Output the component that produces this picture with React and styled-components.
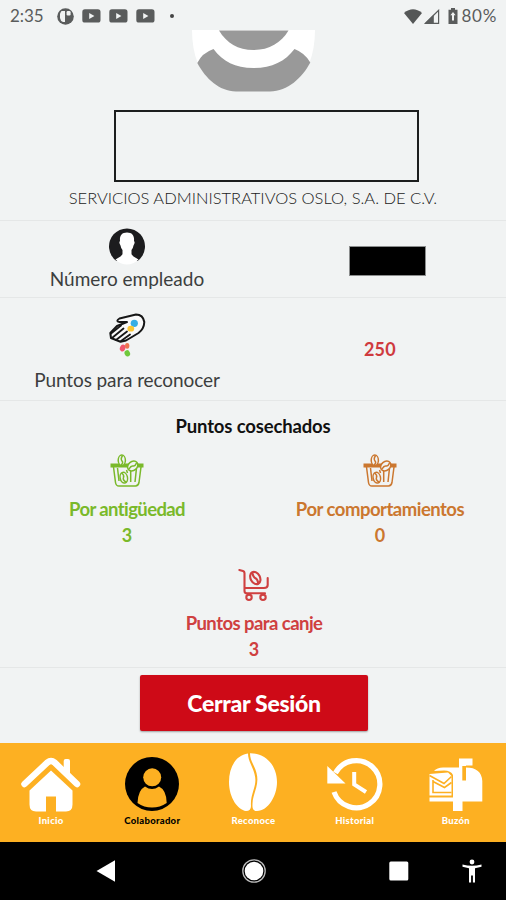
import React from 'react';
import styled, { createGlobalStyle } from 'styled-components';

const GlobalStyle = createGlobalStyle`
  * {
    box-sizing: border-box;
  }

  body {
    margin: 0;
    background: #f1f3f3;
    font-family: Lato, 'Liberation Sans', sans-serif;
    font-variant-ligatures: none;
  }

  svg {
    display: block;
    flex-shrink: 0;
  }
`

const Screen = styled.div`
  display: flex;
  flex-direction: column;
  width: 506px;
  height: 900px;
  overflow: hidden;
  background: #f1f3f3;
`

const StatusBar = styled.header`
  display: flex;
  align-items: center;
  height: 30px;
  padding: 2px 9px 0 10px;
  color: #5a5c5c;
`

const StatusText = styled.span`
  font-size: 17px;
  line-height: 20px;
  letter-spacing: ${props => props.$spacing || 0}px;
  white-space: nowrap;
`

const StatusIcons = styled.div`
  display: flex;
  align-items: center;
  gap: ${props => props.$gap}px;
  margin-left: ${props => props.$left || 'auto'};
  margin-right: ${props => props.$right || 0}px;
`

const Dot = styled.i`
  width: 4px;
  height: 4px;
  margin-left: 7px;
  border-radius: 50%;
  background: #444;
`

const Profile = styled.section`
  display: flex;
  flex-direction: column;
  align-items: center;
  height: 191px;
  border-bottom: 1px solid #e5e7e7;
`

const NameBox = styled.div`
  width: 305px;
  height: 72px;
  margin: 18px 0 0 27px;
  border: 2px solid #1c1e1e;
`

const Text = styled.p`
  margin: ${props => props.$top || 0}px 0 0;
  font-size: ${props => props.$size || 19}px;
  font-weight: ${props => props.$weight || 400};
  line-height: 26px;
  letter-spacing: ${props => props.$spacing || 0}px;
  color: ${props => props.$color || '#3c3e3e'};
  text-align: center;
  white-space: nowrap;
`

const Row = styled.section`
  display: grid;
  grid-template-columns: 1fr 1fr;
  height: ${props => props.$height}px;
  border-bottom: 1px solid #e5e7e7;
`

const Cell = styled.div`
  display: flex;
  flex-direction: column;
  align-items: center;
  padding: ${props => props.$top || 0}px 0 0 ${props => props.$left || 1}px;
`

const HiddenNumber = styled.div`
  width: 77px;
  height: 30px;
  border: 1px solid #8b8d8d;
  background: #000;
`

const Points = styled.section`
  display: flex;
  flex-direction: column;
  align-items: center;
  height: 267px;
  padding-top: 12px;
  border-bottom: 1px solid #e5e7e7;
`

const Columns = styled.div`
  display: grid;
  grid-template-columns: 1fr 1fr;
  width: 100%;
  margin-top: 15px;
`

const Footer = styled.section`
  display: flex;
  justify-content: center;
  height: 75px;
  padding: 7px 0 0 1px;
`

const LogoutButton = styled.button`
  width: 228px;
  height: 56px;
  padding: 0 0 0 1px;
  border: 0;
  border-radius: 2px;
  background: #ce0a17;
  box-shadow: 0 1px 2px rgba(0, 0, 0, 0.35);
  color: #fff;
  font-family: inherit;
  font-size: 23px;
  font-weight: 900;
  letter-spacing: -0.3px;
  cursor: pointer;
`

const TabBar = styled.nav`
  display: grid;
  grid-template-columns: repeat(5, 1fr);
  height: 99px;
  background: #fdb022;
`

const Tab = styled.a`
  display: flex;
  flex-direction: column;
  align-items: center;
  padding: 10px 0 0 1px;
  color: ${props => props.$active ? '#000' : '#fff'};
  font-size: 9.5px;
  font-weight: 900;
  line-height: 12px;
  letter-spacing: 0.3px;
  white-space: nowrap;
`

const TabIcon = styled.span`
  display: flex;
  align-items: center;
  height: 62px;
`

const SystemBar = styled.footer`
  display: flex;
  align-items: center;
  height: 58px;
  padding-left: 96px;
  background: #000;
`

const SystemButton = styled.span`
  margin-left: ${props => props.$left || 0}px;
`

const Pocket = () => (
  <svg width="17" height="17" viewBox="0 0 17 17">
    <circle cx="8.5" cy="8.5" r="8.3" fill="#5a5c5c" />
    <path d="M4.5 3H8V14H6Q3.6 13.4 3 10V5.5Z" fill="#f1f3f3" />
    <rect x="9.6" y="3" width="4" height="4.5" rx="1.2" fill="#f1f3f3" />
  </svg>
)

const Video = () => (
  <svg width="19" height="14" viewBox="0 0 19 14">
    <rect x="0.3" y="0.3" width="18.2" height="13.2" rx="2.6" fill="#5a5c5c" />
    <path d="M7.2 4V10L12.4 7Z" fill="#f1f3f3" />
  </svg>
)

const Wifi = () => (
  <svg width="18" height="15" viewBox="0 0 18 15">
    <path d="M0 4Q9 -3.5 18 4L9 15Z" fill="#555757" />
  </svg>
)

const Signal = () => (
  <svg width="16" height="15" viewBox="0 0 16 15">
    <path d="M1.5 14.3L14.6 1.3V14.3Z" fill="none" stroke="#5a5c5c" strokeWidth="1.2" />
    <path d="M0.5 14.8L9.8 5.5V14.8Z" fill="#5a5c5c" />
  </svg>
)

const Battery = () => (
  <svg width="10" height="16" viewBox="0 0 10 16">
    <path d="M3 0H7V1.8H9.5V16H0.5V1.8H3Z" fill="#5a5c5c" />
    <path d="M5 4L7.6 7.2H6V12.5H4V7.2H2.4Z" fill="#f1f3f3" />
  </svg>
)

const Logo = () => (
  <svg width="123" height="62" viewBox="0 0 123 62">
    <path d="M0 0H123Q123 19 117 34L61 55L6 34Q0 19 0 0Z" fill="#fff" />
    <path d="M27 0.5H96.5C89 13 77 20 61.5 20S34.5 13 27 0.5Z" fill="#999" />
    <path d="M5.3 33Q10 23 21.5 19C31 31.5 43 38 61.5 38S93 31.5 102.5 19Q113 23 118.3 32.5C110 48 96 61 78 61.5H44C27 61 14 49 5.3 33Z" fill="#999" />
  </svg>
)

const Employee = () => (
  <svg width="38" height="38" viewBox="0 0 38 38">
    <path d="M8.5 34A18 18 0 1 1 29.5 34Z" fill="#1c1c1e" />
    <path d="M19 5.5C24.5 5.5 26.5 9 26 14Q27.5 15.5 25.5 18.5Q25 21.5 23.5 23V27Q24 29 30.5 32.5Q25.5 37.5 19 37.5T7.5 32.5Q14 29 14.5 27V23Q13 21.5 12.5 18.5Q10.5 15.5 12 14C11.5 9 13.5 5.5 19 5.5Z" fill="#fff" />
  </svg>
)

const Hand = () => (
  <svg width="37" height="45" viewBox="0 0 37 45">
    <path d="M10 9Q6.5 8 10.5 5.5L27 1.500Q34 1.500 35.300 9Q35 16 29.500 20L17 27.500L11.500 28.800L2 25L1.300 20L8 13L18 9L10 9" fill="#fafafa" stroke="#161616" strokeWidth="2" strokeLinejoin="round" />
    <path d="M3 25L14.500 15.500M7 27L18 18.500M12 28L21 21.500M2 20.500L12 12.500" fill="none" stroke="#161616" strokeWidth="1.800" strokeLinecap="round" />
    <circle cx="25.300" cy="10.300" r="3.600" fill="#38aee6" />
    <ellipse cx="21.800" cy="15.700" rx="3.400" ry="2.900" fill="#fbc736" />
    <ellipse cx="13.700" cy="35" rx="2.700" ry="3.500" transform="rotate(25 13.700 35)" fill="#f0566c" />
    <ellipse cx="18.200" cy="32.800" rx="2.200" ry="2.900" fill="#ee7350" />
    <ellipse cx="18.300" cy="40.300" rx="2.700" ry="3.200" transform="rotate(-25 18.300 40.300)" fill="#70c83c" />
  </svg>
)

const Basket = ({ color }) => (
  <svg width="34" height="34" viewBox="0 0 34 34">
    <path d="M0.5 9.5H33.5V13.5H0.5Z" fill={color} />
    <g fill="none" stroke={color} strokeWidth="1.5">
      <path d="M3.5 13L5.5 28.5Q6 32 9 32H25.5Q28.3 32 29 28.5L31 13M7.5 14L9 27M20.7 17V28M26.5 14L25 28M16.5 16L17.5 19" />
      <g fill="#f1f3f3">
        <ellipse cx="11.8" cy="6.3" rx="3.6" ry="5.2" />
        <ellipse cx="22.7" cy="12" rx="4.4" ry="5.6" transform="rotate(50 22.7 12)" />
        <ellipse cx="13.8" cy="23.7" rx="3.7" ry="5.4" transform="rotate(-12 13.8 23.7)" />
      </g>
      <path d="M12.5 1.5Q10.3 5 12 7T11 11M19 15Q21 11.5 23 12T26.5 9M11.5 19Q14.5 21 13.5 23.5T16 28" />
    </g>
  </svg>
)

const Cart = () => (
  <svg width="32" height="34" viewBox="0 0 32 34">
    <g fill="none" stroke="#cf4040" strokeWidth="2.1" strokeLinecap="round" strokeLinejoin="round">
      <path d="M1.3 2L5 3Q6.5 3.5 6.5 5V23Q6.5 25.3 9 25.3H27M6.5 20H26Q29.7 20 29.7 17V10" />
      <circle cx="11" cy="29.3" r="2.7" />
      <circle cx="25" cy="29.3" r="2.7" />
      <ellipse cx="17.3" cy="10" rx="4.7" ry="6.5" transform="rotate(-28 17.3 10)" />
      <path d="M14.3 5Q15.5 9.5 17.5 10.3T20.2 15" />
    </g>
  </svg>
)

const Home = () => (
  <svg width="60" height="62" viewBox="0 0 60 62">
    <path d="M42.7 17V8Q42.7 6 44.7 6H47Q49 6 49 8V22Z" fill="#fff" />
    <path d="M3.5 31L26.5 9.5Q30 6.5 33.5 9.5L56 31" fill="none" stroke="#fff" strokeWidth="6.5" strokeLinecap="round" />
    <path d="M30 17.5L51.5 37.5V51.5Q51.5 58.5 45 58.5H35V43.5H25V58.5H15Q8.5 58.5 8.5 51.5V37.5Z" fill="#fff" />
  </svg>
)

const Collaborator = () => (
  <svg width="54" height="62" viewBox="0 0 54 62">
    <circle cx="27" cy="31" r="27" fill="#000" />
    <path d="M20 33.5Q27 38.5 34 33.5Q41.5 37 41.7 50Q35 54.5 27 54.5T12.5 50Q13 37 20 33.5Z" fill="#fdb022" />
    <circle cx="27.2" cy="24.3" r="9" fill="#fdb022" />
  </svg>
)

const Bean = () => (
  <svg width="48" height="62" viewBox="1 0 48 62">
    <path d="M20 0.5C8 2 1 14 1 29C1 45 10 57 18 58Q23 58 23 53C22 40 30 33 26.500 21C25 14 20 8 20 0.500Z" fill="#fff" />
    <path d="M22 0.300C39 0 49 14 49 29C49 43 40 58 29 58Q24 58 24.500 52C24 41 32 33 28.500 20C27 13 22 8 22 0.300Z" fill="#fff" />
  </svg>
)

const History = () => (
  <svg width="56" height="62" viewBox="0 0 56 62">
    <path d="M8.5 20A23.6 23.6 0 1 1 7 39" fill="none" stroke="#fff" strokeWidth="5.2" />
    <path d="M0.3 13V30.5H18.5Z" fill="#fff" />
    <path d="M27.2 19V31.5L39 39" fill="none" stroke="#fff" strokeWidth="4" />
  </svg>
)

const Mailbox = () => (
  <svg width="54" height="62" viewBox="0 0 54 62">
    <path d="M5 18Q8 14.5 14 14.5H30V5.5H43.5V12.5H37V14.5Q52.5 14.5 53.3 28V48.5H33.5V58H24V48.5H0.5V44.5H24V22Q22 17.5 15 17.5Z" fill="#fff" />
    <path d="M33.3 13H37V27.5H33.3Z" fill="#fdb022" />
    <path d="M0.5 21L19 19.5L22.5 23V42.5H0.5Z" fill="#fff" />
    <path d="M0.5 22.5L15 30.5L22.5 23.5M4 27V39.5H22.5M22.5 29.5L15.500 34.500L4 28.500" fill="none" stroke="#fdb022" strokeWidth="1.600" />
  </svg>
)

const App = () => {
  const tabs = [
    { name: 'Inicio', icon: <Home /> },
    { name: 'Colaborador', icon: <Collaborator />, active: true },
    { name: 'Reconoce', icon: <Bean /> },
    { name: 'Historial', icon: <History /> },
    { name: 'Buzón', icon: <Mailbox /> },
  ];

  return (
    <Screen>
      <GlobalStyle />
      <StatusBar>
        <StatusText $spacing={-0.1}>2:35</StatusText>
        <StatusIcons $gap={8} $left="14px">
          <Pocket />
          <Video />
          <Video />
          <Video />
          <Dot />
        </StatusIcons>
        <StatusIcons $gap={2} $right={4}>
          <Wifi />
          <Signal />
        </StatusIcons>
        <StatusIcons $gap={4} $left="4px">
          <Battery />
          <StatusText $spacing={0.7}>80%</StatusText>
        </StatusIcons>
      </StatusBar>
      <Profile>
        <Logo />
        <NameBox />
        <Text $size={16.5} $top={3} $weight={300} $color="#222">SERVICIOS ADMINISTRATIVOS OSLO, S.A. DE C.V.</Text>
      </Profile>
      <Row $height={77}>
        <Cell $top={6}>
          <Employee />
          <Text $top={1}>Número empleado</Text>
        </Cell>
        <Cell $top={25} $left={15}>
          <HiddenNumber />
        </Cell>
      </Row>
      <Row $height={103}>
        <Cell $top={15}>
          <Hand />
          <Text $top={9} $spacing={-0.1}>Puntos para reconocer</Text>
        </Cell>
        <Cell $top={38}>
          <Text $weight={700} $color="#cf3a3e" $size={18} $spacing={0.3}>250</Text>
        </Cell>
      </Row>
      <Points>
        <Text $weight={700} $color="#111" $size={18.5} $spacing={-0.15}>Puntos cosechados</Text>
        <Columns>
          <Cell>
            <Basket color="#7ab92a" />
            <Text $weight={700} $color="#7ab92a" $top={8} $size={18.5} $spacing={-0.6}>Por antigüedad</Text>
            <Text $weight={700} $color="#7ab92a" $size={18}>3</Text>
          </Cell>
          <Cell>
            <Basket color="#cb772f" />
            <Text $weight={700} $color="#cb772f" $top={8} $size={18.5} $spacing={-0.5}>Por comportamientos</Text>
            <Text $weight={700} $color="#cb772f" $size={18}>0</Text>
          </Cell>
        </Columns>
        <Cell $top={20} $left={2}>
          <Cart />
          <Text $weight={700} $color="#cf4040" $top={8} $size={18.5} $spacing={-0.55}>Puntos para canje</Text>
          <Text $weight={700} $color="#cf4040" $size={18}>3</Text>
        </Cell>
      </Points>
      <Footer>
        <LogoutButton>Cerrar Sesión</LogoutButton>
      </Footer>
      <TabBar>
        {tabs.map(tab => (
          <Tab key={tab.name} $active={tab.active}>
            <TabIcon>{tab.icon}</TabIcon>
            {tab.name}
          </Tab>
        ))}
      </TabBar>
      <SystemBar>
        <SystemButton>
          <svg width="19" height="22" viewBox="0 0 19 22">
            <path d="M0.5 11L19 0.3V21.7Z" fill="#fff" />
          </svg>
        </SystemButton>
        <SystemButton $left={127}>
          <svg width="24" height="24" viewBox="0 0 24 24">
            <circle cx="12" cy="12" r="11.2" fill="none" stroke="#bbb" strokeWidth="1.3" />
            <circle cx="12" cy="12" r="9.3" fill="#fff" />
          </svg>
        </SystemButton>
        <SystemButton $left={123}>
          <svg width="20" height="20" viewBox="0 0 20 20">
            <rect x="0.3" y="0.5" width="19" height="19" rx="1.5" fill="#fff" />
          </svg>
        </SystemButton>
        <SystemButton $left={53}>
          <svg width="20" height="24" viewBox="0 0 20 24">
            <circle cx="10" cy="3" r="2.4" fill="#fff" />
            <path d="M0.5 5.5Q10 8 19.5 5.5V7.8L13 9.2V23.5H10.9V16.5H9.1V23.5H7V9.2L0.5 7.8Z" fill="#fff" />
          </svg>
        </SystemButton>
      </SystemBar>
    </Screen>
  )
}

export default App;
